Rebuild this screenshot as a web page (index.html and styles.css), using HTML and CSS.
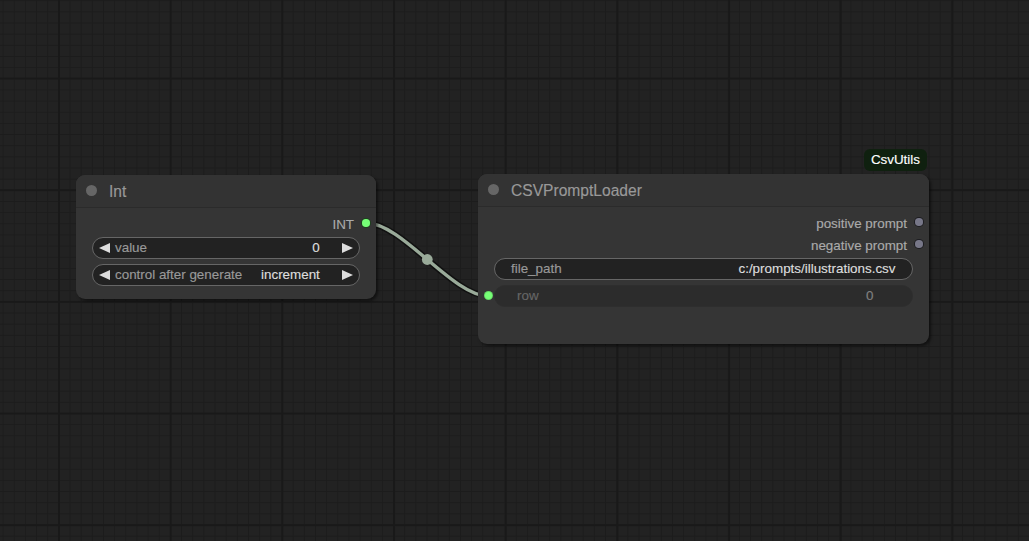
FILE: index.html
```html
<!DOCTYPE html>
<html lang="en">
<head>
<meta charset="utf-8">
<title>Graph</title>
<link rel="stylesheet" href="styles.css">
</head>
<body>
<main class="canvas">
  <svg class="links" width="1029" height="541" viewBox="0 0 1029 541">
    <path class="link-border" d="M366.5,223 C401.8,223 452.7,296 488,296"/>
    <path class="link" d="M366.5,223 C401.8,223 452.7,296 488,296"/>
    <circle class="link-mid" cx="427.3" cy="259.5" r="5.4"/>
  </svg>

  <section class="node node-int">
    <header class="node-title">
      <span class="title-dot"></span>
      <span class="title-text">Int</span>
    </header>
    <div class="node-body">
      <div class="slot-row">
        <span class="slot-label">INT</span>
        <span class="slot-dot on"></span>
      </div>
      <div class="widgets">
        <div class="widget stepper">
          <span class="arrow left"></span>
          <span class="w-label">value</span>
          <span class="w-value">0</span>
          <span class="arrow right"></span>
        </div>
        <div class="widget stepper">
          <span class="arrow left"></span>
          <span class="w-label">control after generate</span>
          <span class="w-value">increment</span>
          <span class="arrow right"></span>
        </div>
      </div>
    </div>
  </section>

  <section class="node node-csv">
    <span class="badge">CsvUtils</span>
    <header class="node-title">
      <span class="title-dot"></span>
      <span class="title-text">CSVPromptLoader</span>
    </header>
    <div class="node-body">
      <div class="slot-row">
        <span class="slot-label">positive prompt</span>
        <span class="slot-dot off"></span>
      </div>
      <div class="slot-row">
        <span class="slot-label">negative prompt</span>
        <span class="slot-dot off"></span>
      </div>
      <div class="widgets">
        <div class="widget text">
          <span class="w-label">file_path</span>
          <span class="w-value">c:/prompts/illustrations.csv</span>
        </div>
        <div class="widget-line">
          <span class="slot-dot on in"></span>
          <div class="widget converted">
            <span class="w-label">row</span>
            <span class="w-value">0</span>
          </div>
        </div>
      </div>
    </div>
  </section>
</main>
</body>
</html>
```

FILE: styles.css
```css
html, body {
  margin: 0;
  padding: 0;
  background: #222222;
}

body {
  font-family: "Liberation Sans", Arial, sans-serif;
}

.canvas {
  position: relative;
  width: 1029px;
  height: 541px;
  overflow: hidden;
  background-color: #222222;
  background-image:
    linear-gradient(to right, #191919 2px, transparent 2px),
    linear-gradient(to bottom, #191919 2px, transparent 2px),
    linear-gradient(to right, #1c1c1c 1px, transparent 1px),
    linear-gradient(to bottom, #1c1c1c 1px, transparent 1px);
  background-size:
    111.7px 111.7px,
    111.7px 111.7px,
    11.17px 11.17px,
    11.17px 11.17px;
  background-position:
    58px 0,
    0 77.5px,
    2.6px 0,
    0 0.2px;
}

/* links */
.links {
  position: absolute;
  left: 0;
  top: 0;
}

.link-border {
  fill: none;
  stroke: rgba(0, 0, 0, 0.5);
  stroke-width: 6.5;
}

.link {
  fill: none;
  stroke: #99aa99;
  stroke-width: 3.4;
}

.link-mid {
  fill: #99aa99;
}

/* nodes */
.node {
  position: absolute;
  display: flex;
  flex-direction: column;
  box-sizing: border-box;
  background: #353535;
  border-radius: 9px;
  box-shadow: 2px 2px 3px rgba(0, 0, 0, 0.5);
  -webkit-text-stroke: 0.15px currentColor;
}

.node-int {
  left: 75.5px;
  top: 174.5px;
  width: 300.5px;
  height: 124px;
}

.node-csv {
  left: 477.5px;
  top: 173.5px;
  width: 451.5px;
  height: 170.5px;
}

.node-title {
  display: flex;
  align-items: center;
  box-sizing: border-box;
  height: 33.5px;
  padding-left: 10px;
  background: #333333;
  border-radius: 9px 9px 0 0;
  border-bottom: 1px solid #2b2b2b;
}

.title-dot {
  width: 11px;
  height: 11px;
  border-radius: 50%;
  background: #666666;
  flex: none;
}

.title-text {
  align-self: flex-start;
  margin-left: 12.5px;
  font-size: 15.6px;
  line-height: 33px;
  color: #999999;
}

.node-body {
  display: flex;
  flex-direction: column;
  padding-top: 4px;
}

.slot-row {
  display: flex;
  justify-content: flex-end;
  align-items: center;
  height: 22px;
  padding-right: 5.5px;
}

.slot-label {
  align-self: flex-start;
  margin-right: 7px;
  font-size: 13.4px;
  line-height: 26px;
  color: #aaaaaa;
  white-space: nowrap;
}

.slot-dot {
  flex: none;
  box-sizing: border-box;
  width: 9.5px;
  height: 9.5px;
  border-radius: 50%;
  border: 1px solid rgba(0, 0, 0, 0.75);
}

.slot-dot.on {
  background: #77ff77;
}

.slot-dot.off {
  background: #777788;
}

.slot-dot.in {
  border-color: rgba(0, 0, 0, 0.15);
}

/* widgets */
.widgets {
  display: flex;
  flex-direction: column;
  gap: 5px;
  margin-top: 2.5px;
  padding: 0 16.5px;
}

.widget {
  display: flex;
  align-items: center;
  box-sizing: border-box;
  height: 22px;
  border: 1px solid #666666;
  border-radius: 11px;
  background: #222222;
  font-size: 13.4px;
  line-height: 20px;
  white-space: nowrap;
}

.w-label {
  color: #999999;
}

.w-value {
  color: #dddddd;
}

.stepper {
  padding: 0 5.7px;
}

.stepper .w-label {
  flex: 1;
  margin-left: 5.3px;
}

.stepper .w-value {
  margin-right: 22px;
}

.arrow {
  flex: none;
  width: 0;
  height: 0;
  border-top: 5.5px solid transparent;
  border-bottom: 5.5px solid transparent;
}

.arrow.left {
  border-right: 11px solid #dddddd;
}

.arrow.right {
  border-left: 11px solid #dddddd;
}

.text {
  justify-content: space-between;
  padding: 0 16px;
}

.widget-line {
  display: flex;
  align-items: center;
  margin-left: -10.5px;
}

.widget-line .slot-dot {
  margin-right: 1px;
}

.converted {
  flex: 1;
  justify-content: space-between;
  padding: 0 38px 0 22px;
  background: #2c2c2c;
  border-color: #2e2e2e;
}

.converted .w-label {
  color: #666666;
}

.converted .w-value {
  color: #808080;
}

/* badge */
.badge {
  position: absolute;
  top: -24.5px;
  right: 2px;
  height: 22px;
  padding: 0 7px;
  border-radius: 6px;
  background: #0f200f;
  color: #ffffff;
  font-size: 13.4px;
  line-height: 22px;
}
```
